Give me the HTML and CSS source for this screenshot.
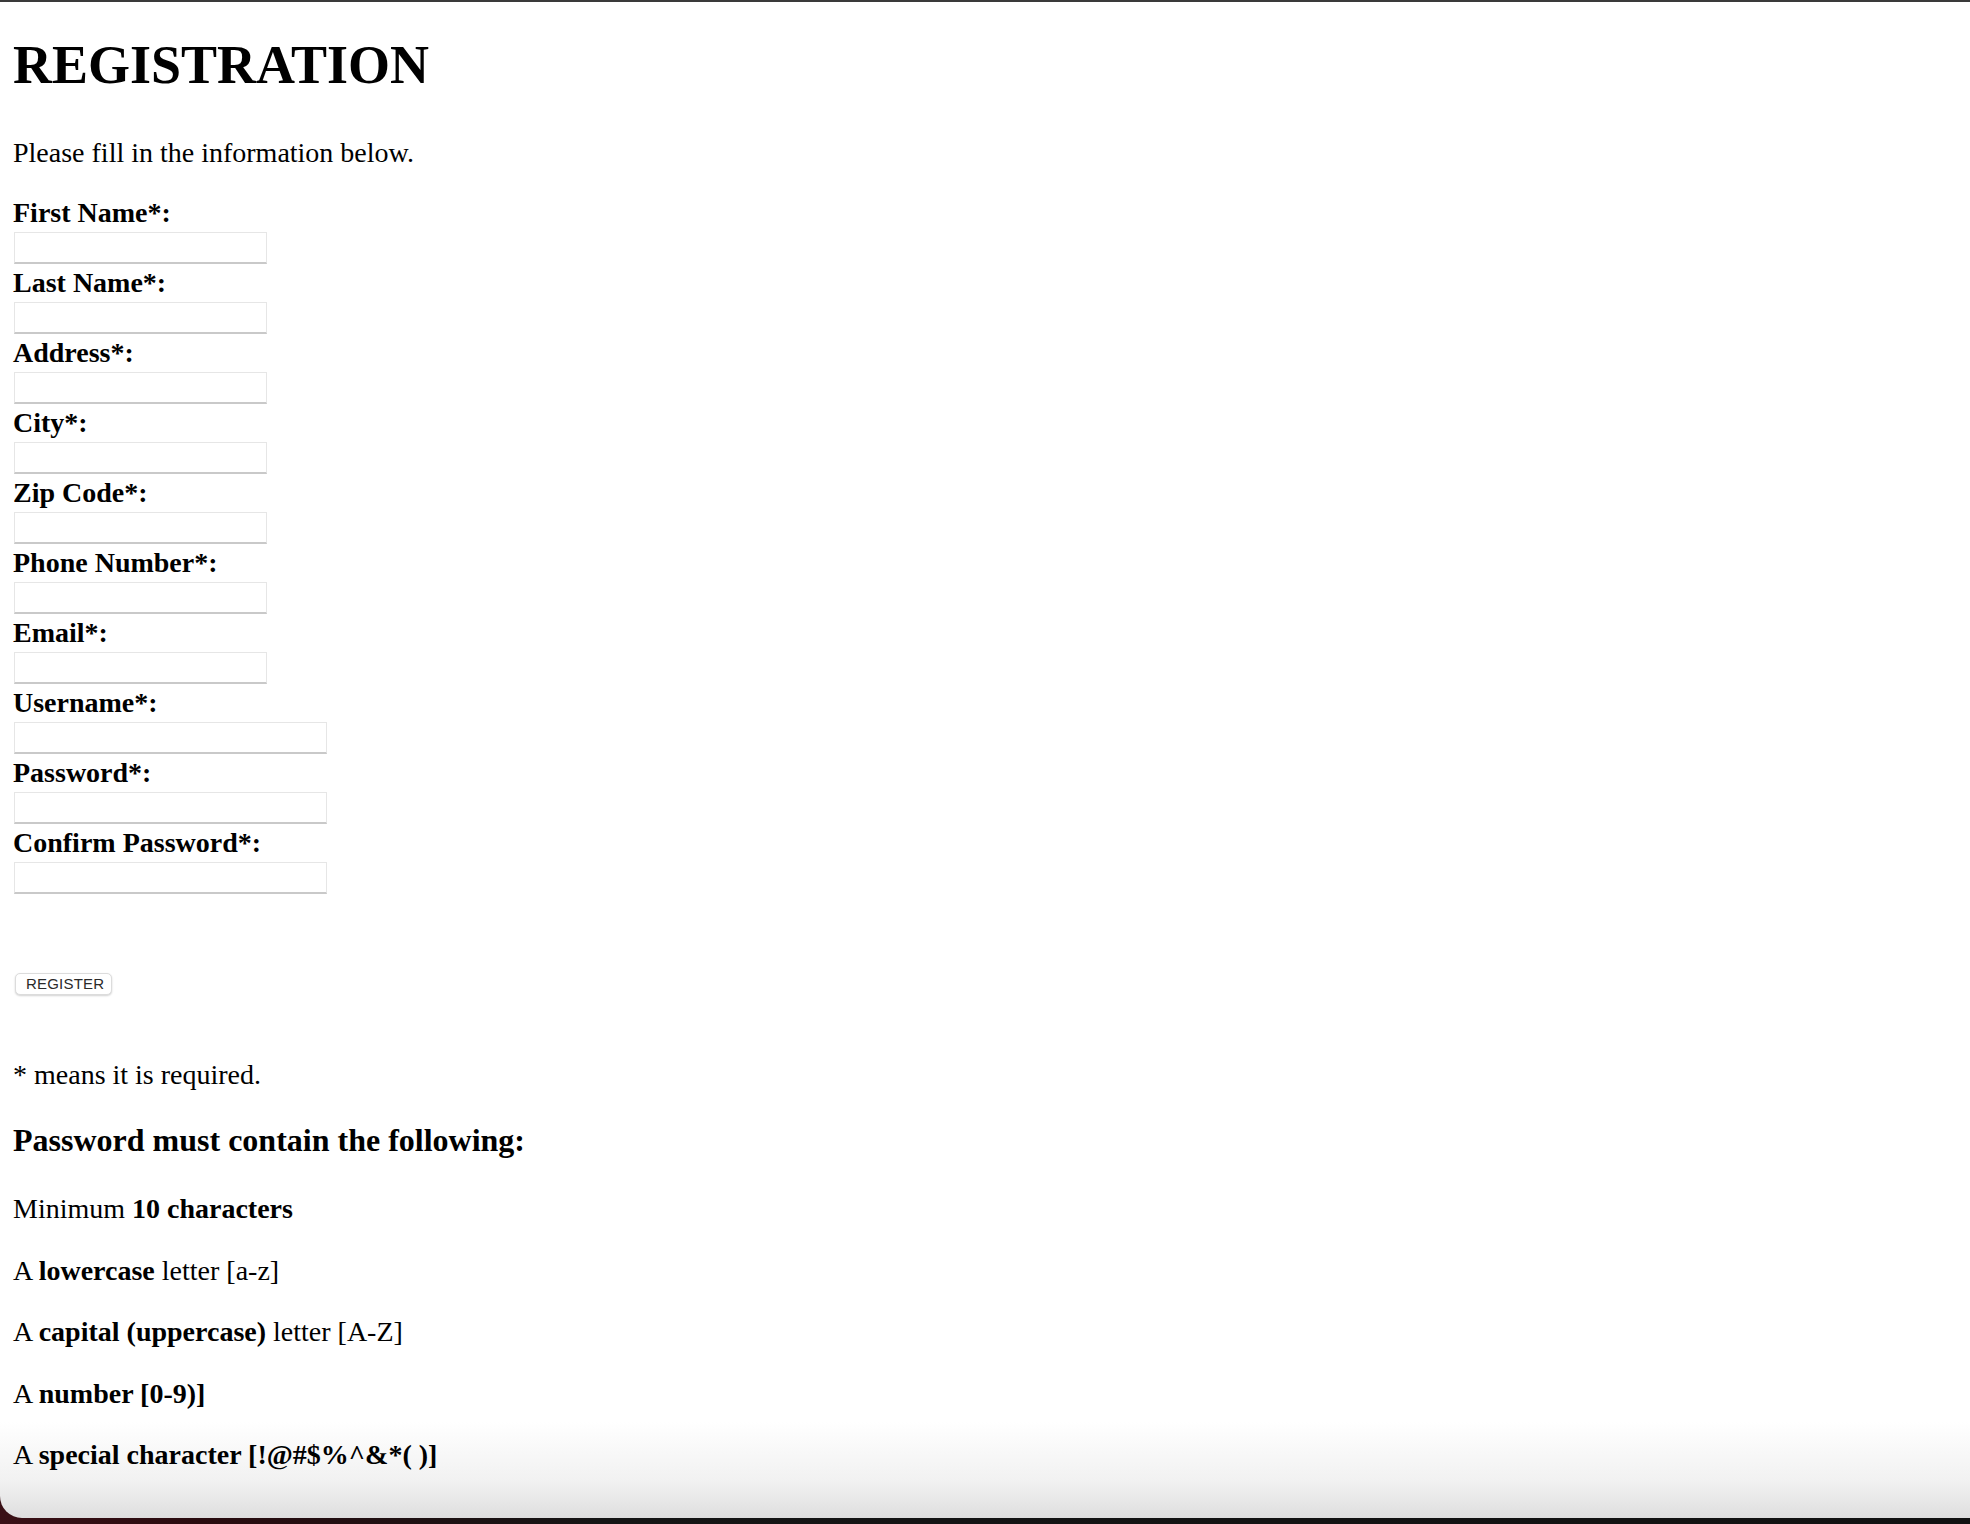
FILE: index.html
```html
<!DOCTYPE html>
<html lang="en">
<head>
<meta charset="utf-8">
<title>Registration</title>
<link rel="stylesheet" href="styles.css">
</head>
<body>
<div class="page">
  <h1 class="title">REGISTRATION</h1>
  <p class="intro">Please fill in the information below.</p>
  <form class="form">
    <label class="label" for="fn">First Name*:</label>
    <input class="field" id="fn" type="text">
    <label class="label" for="ln">Last Name*:</label>
    <input class="field" id="ln" type="text">
    <label class="label" for="ad">Address*:</label>
    <input class="field" id="ad" type="text">
    <label class="label" for="ci">City*:</label>
    <input class="field" id="ci" type="text">
    <label class="label" for="zc">Zip Code*:</label>
    <input class="field" id="zc" type="text">
    <label class="label" for="ph">Phone Number*:</label>
    <input class="field" id="ph" type="text">
    <label class="label" for="em">Email*:</label>
    <input class="field" id="em" type="text">
    <label class="label" for="un">Username*:</label>
    <input class="field wide" id="un" type="text">
    <label class="label" for="pw">Password*:</label>
    <input class="field wide" id="pw" type="password">
    <label class="label" for="cp">Confirm Password*:</label>
    <input class="field wide" id="cp" type="password">
    <button class="btn" type="button">REGISTER</button>
  </form>
  <p class="note">* means it is required.</p>
  <h3 class="subhead">Password must contain the following:</h3>
  <p class="req first">Minimum <b>10 characters</b></p>
  <p class="req">A <b>lowercase</b> letter [a-z]</p>
  <p class="req">A <b>capital (uppercase)</b> letter [A-Z]</p>
  <p class="req">A <b>number [0-9)]</b></p>
  <p class="req">A <b>special character [!@#$%^&amp;*( )]</b></p>
</div>
</body>
</html>
```
FILE: styles.css
```css
html {
  margin: 0;
  height: 1524px;
  background: linear-gradient(to right, #3a1016 0, #2a0b0f 200px, #151515 600px, #111 100%);
}
body {
  margin: 0;
  height: 1518px;
  box-sizing: border-box;
  border-top: 2px solid #3a3a3a;
  border-bottom-left-radius: 22px;
  background: linear-gradient(to bottom, #fff 0, #fff 1420px, #f1f1f1 1480px, #dedede 1516px);
  font-family: "Liberation Serif", "Times New Roman", serif;
  color: #000;
  overflow: hidden;
}
.page {
  padding-left: 13px;
}
.title {
  margin: 33px 0 0;
  font-size: 54px;
  line-height: 61px;
  font-weight: bold;
}
.intro {
  margin: 41px 0 0;
  font-size: 28px;
  line-height: 31px;
}
.form {
  margin: 29px 0 0;
  display: flex;
  flex-direction: column;
  align-items: flex-start;
}
.label {
  display: block;
  font-size: 28px;
  line-height: 31px;
  font-weight: bold;
}
.field {
  display: block;
  box-sizing: border-box;
  width: 253px;
  height: 32px;
  margin: 4px 0 3px 1px;
  padding: 0 4px;
  border: 1px solid #e6e6e6;
  border-bottom: 2px solid #c9c9c9;
  border-radius: 0;
  background: #fff;
  outline: none;
}
.field.wide {
  width: 313px;
}
.btn {
  margin: 76px 0 0 2px;
  box-sizing: border-box;
  width: 97px;
  height: 22px;
  padding: 0 0 0 10px;
  text-align: left;
  font-family: "Liberation Sans", Arial, sans-serif;
  font-size: 15px;
  line-height: 20px;
  letter-spacing: 0.2px;
  color: #2a2a2a;
  background: #fff;
  border: 1px solid #dcdcdc;
  border-radius: 5px;
  box-shadow: 0 1px 2px rgba(0, 0, 0, 0.18);
}
.note {
  margin: 64px 0 0;
  font-size: 28px;
  line-height: 31px;
}
.subhead {
  margin: 32px 0 0;
  font-size: 32px;
  line-height: 37px;
  font-weight: bold;
}
.req {
  margin: 30.5px 0 0;
  font-size: 28px;
  line-height: 31px;
}
.req.first {
  margin-top: 34px;
}
```
